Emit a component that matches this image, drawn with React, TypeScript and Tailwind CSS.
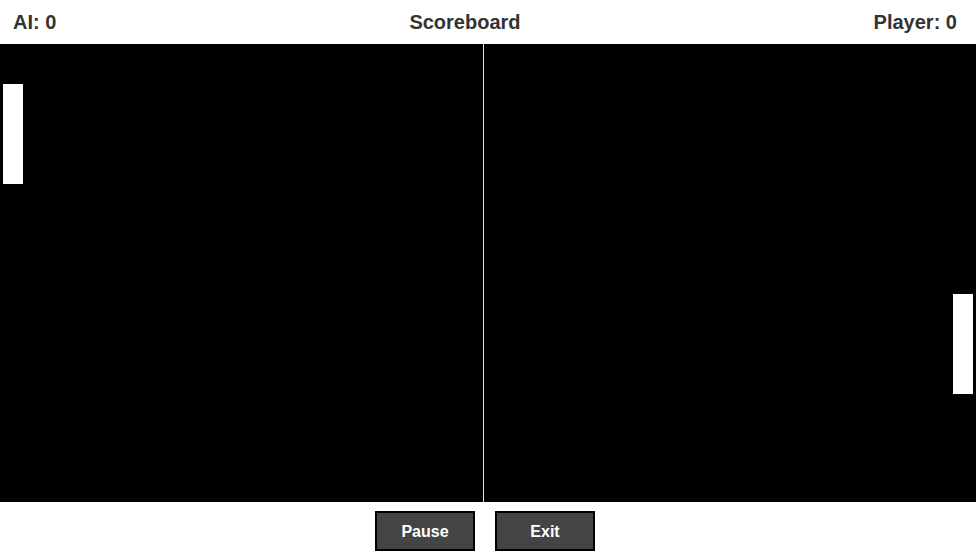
const FONT = { fontFamily: '"Liberation Sans", Arial, sans-serif' }

/** Campo de juego: paletas y línea central. */
function Court() {
  return (
    <svg width={976} height={458} className="block bg-black" aria-label="Pong court">
      <rect x={483} y={0} width={1} height={458} fill="#e5e5e5" />
      {/* AI */}
      <rect x={3} y={40} width={20} height={100} fill="#fff" />
      {/* Player */}
      <rect x={953} y={250} width={20} height={100} fill="#fff" />
    </svg>
  )
}

function GameButton({ label }: { label: string }) {
  return (
    <button
      type="button"
      className="h-[40px] w-[100px] border-2 border-black bg-[#444] pt-[2px] text-[16px] font-bold text-white"
    >
      {label}
    </button>
  )
}

export default function App() {
  return (
    <div className="h-[557px] w-[976px] overflow-hidden bg-white" style={FONT}>
      {/* Marcador */}
      <div className="flex h-[44px] items-center justify-between pl-[13px] pr-[19px] text-[20px] font-bold leading-[44px] text-[#333]">
        <span>AI: 0</span>
        <span>Scoreboard</span>
        <span>Player: 0</span>
      </div>

      <Court />

      <div className="mt-[9px] flex justify-center gap-5 pr-[6px]">
        <GameButton label="Pause" />
        <GameButton label="Exit" />
      </div>
    </div>
  )
}
